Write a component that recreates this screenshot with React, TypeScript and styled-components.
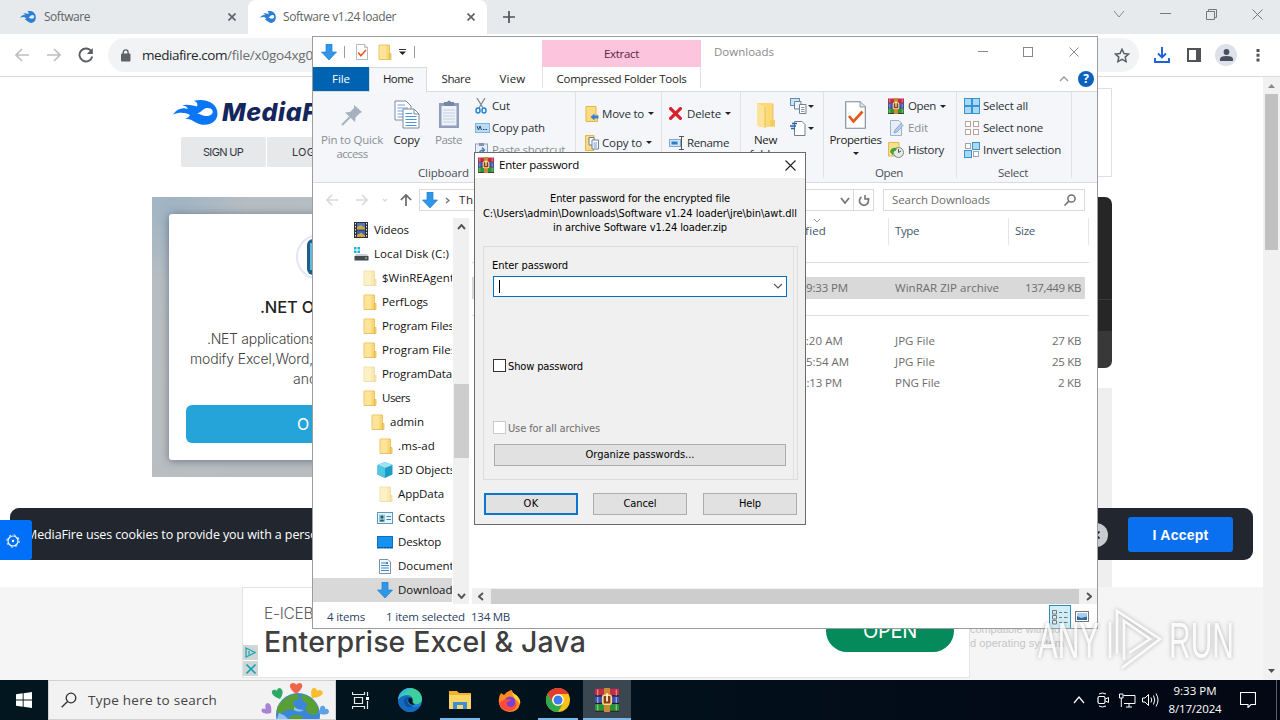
import React, { useLayoutEffect, useRef } from 'react';
import styled, { createGlobalStyle } from 'styled-components';

const GlobalStyle = createGlobalStyle`
  * { box-sizing: border-box; }
  html, body { margin: 0; padding: 0; overflow: hidden; }
  body { font-family: 'Open Sans', 'Noto Sans', sans-serif; font-size: 12px; color: #000; }
  svg { display: block; flex: none; }
`;

const UI = `'Open Sans', 'Noto Sans', sans-serif`;
const TAHOMA = `'DejaVu Sans Condensed', 'DejaVu Sans', sans-serif`;

/* ---------- Text that is tracked to a given advance width ---------- */
const TextSpan = styled.span<{ $size: number; $color: string; $font: string; $weight: number; $line: number; $italic?: boolean }>`
  display: block;
  flex: none;
  width: max-content;
  white-space: pre;
  font-family: ${p => p.$font};
  font-size: ${p => p.$size}px;
  font-weight: ${p => p.$weight};
  font-style: ${p => (p.$italic ? 'italic' : 'normal')};
  line-height: ${p => p.$line}px;
  color: ${p => p.$color};
`;

type TextProps = {
  children: string; w?: number; size?: number; color?: string; font?: string;
  weight?: number; line?: number; italic?: boolean;
};

function Text({ children, w, size = 11.5, color = '#1e1e1e', font = UI, weight = 400, line = 16, italic }: TextProps) {
  const ref = useRef<HTMLSpanElement>(null);
  useLayoutEffect(() => {
    const el = ref.current;
    if (!el || !w) return;
    el.style.letterSpacing = '0px';
    const natural = el.getBoundingClientRect().width;
    el.style.letterSpacing = `${(w - natural) / children.length}px`;
  }, [children, w]);
  return (
    <TextSpan ref={ref} $size={size} $color={color} $font={font} $weight={weight} $line={line} $italic={italic}>
      {children}
    </TextSpan>
  );
}

/* ---------- Icons ---------- */
const Flame = ({ w, h, color }: { w: number; h: number; color: string }) => (
  <svg width={w} height={h} viewBox="0 0 45 25" preserveAspectRatio="none">
    <path fill={color} fillRule="evenodd" d="M0 14.500C4 9 9 7 15 9C14 6.500 12 5.500 9 5.500C13 4 18 5 24 6.500C25 4 24 2 21 .8C27-.6 35-.2 40 4C45 8 46 16 42 20.500C37 26 28 26 22 22C19 20 17 18.500 12 19C14.500 18 16 17 17 15C12 12 6 12 0 14.500ZM24 13.500C28 14 30 16.500 34.500 16C38.500 15.500 40.500 13 39.500 10.500C38 7.500 33 7.500 30.500 9.500C28.500 11 27 12.500 24 13.500Z" />
  </svg>
);
const Cross = ({ s, color, sw = 1 }: { s: number; color: string; sw?: number }) => (
  <svg width={s} height={s} viewBox={`0 0 ${s} ${s}`}>
    <path d={`M.5 .5L${s - 0.5} ${s - 0.5}M${s - 0.5} .5L.5 ${s - 0.5}`} stroke={color} strokeWidth={sw} fill="none" />
  </svg>
);
const Chevron = ({ w, h, dir, color, sw = 1.4 }: { w: number; h: number; dir: 'up' | 'down' | 'left' | 'right'; color: string; sw?: number }) => {
  const d = {
    down: `M1 1L${w / 2} ${h - 1}L${w - 1} 1`,
    up: `M1 ${h - 1}L${w / 2} 1L${w - 1} ${h - 1}`,
    right: `M1 1L${w - 1} ${h / 2}L1 ${h - 1}`,
    left: `M${w - 1} 1L1 ${h / 2}L${w - 1} ${h - 1}`,
  }[dir];
  return <svg width={w} height={h}><path d={d} stroke={color} strokeWidth={sw} fill="none" /></svg>;
};
const Caret = ({ color = '#222' }: { color?: string }) => (
  <svg width="6" height="3"><path d="M0 0H6L3 3Z" fill={color} /></svg>
);
const BlueArrow = () => (
  <svg width="16" height="16"><path d="M5 0H11V8H15.5L8 16L.5 8H5Z" fill="#3096ea" stroke="#1f7fd0" strokeWidth=".7" /></svg>
);
const Folder = ({ pale, w = 14, h = 16 }: { pale?: boolean; w?: number; h?: number }) => (
  <svg width={w} height={h} viewBox="0 0 14 16" preserveAspectRatio="none" opacity={pale ? 0.55 : 1}>
    <path d="M1 1H11.5V9.5H13V15.5H1Z" fill="#fbd978" stroke="#e3b74b" strokeWidth=".8" />
    <path d="M1.5 1.5H8V15H1.5Z" fill="#fde49a" />
    <path d="M11.3 9.5V15" stroke="#d9a93c" strokeWidth=".8" />
  </svg>
);
const OpenFolder = () => (
  <svg width="20" height="28" viewBox="0 0 20 28">
    <path d="M1 2H17V22L19 23V26H4L1 24Z" fill="#fbd878" />
    <path d="M1 2L9 6V27L1 24Z" fill="#fde39a" />
    <path d="M9 6L9 27M17 3V22" stroke="#e9bd58" strokeWidth=".9" />
    <path d="M14 19H19V25H14Z" fill="#f5cb62" />
  </svg>
);
const Sheet = ({ w = 21, h = 28, check }: { w?: number; h?: number; check?: boolean }) => (
  <svg width={w} height={h} viewBox="0 0 21 28" preserveAspectRatio="none">
    <path d="M.7 .7H15L20.3 6V27.3H.7Z" fill="#fff" stroke="#7d8894" strokeWidth="1.1" />
    <path d="M15 .7V6H20.3" fill="#dfe5ea" stroke="#7d8894" strokeWidth=".8" />
    {check && <path d="M4 15L8.5 20.5L17.5 10.5" fill="none" stroke="#e8591c" strokeWidth="2.7" />}
  </svg>
);
const Pin = () => (
  <svg width="22" height="22" viewBox="0 0 22 22">
    <path d="M13 1L21 8L18.5 9.5L14.5 13.5L14 18L4 8.5L9 8L13 4Z" fill="#a5b1be" />
    <path d="M9 13L1 21" stroke="#a5b1be" strokeWidth="2" />
  </svg>
);
const CopyIcon = () => (
  <svg width="26" height="29" viewBox="0 0 26 29">
    <path d="M1 1H12L17 6V20H1Z" fill="#fff" stroke="#7b8aa0" />
    <path d="M3.500 5H11M3.500 8H14M3.500 11H14M3.500 14H14M3.500 17H14" stroke="#6aa2dc" />
    <path d="M9 9H20L25 14V28H9Z" fill="#fff" stroke="#7b8aa0" />
    <path d="M20 9V14H25" fill="none" stroke="#7b8aa0" />
    <path d="M11.500 13.500H18M11.500 16.500H22.500M11.500 19.500H22.500M11.500 22.500H22.500M11.500 25.500H22.500" stroke="#4f92d8" />
  </svg>
);
const PasteIcon = () => (
  <svg width="22" height="29" viewBox="0 0 22 29">
    <rect x="1" y="3" width="20" height="25" fill="#8f9fbb" />
    <rect x="3.500" y="6" width="15" height="19.500" fill="#eef2f9" />
    <path d="M5 10H17M5 13H17M5 16H17M5 19H17M5 22H17" stroke="#c4d0e4" />
    <path d="M6 2H9Q11-1 13 2H16V6H6Z" fill="#7687a5" />
  </svg>
);
const Scissors = () => (
  <svg width="12" height="16" viewBox="0 0 12 16">
    <path d="M2 0L8 10M10 0L4 10" stroke="#7d8a99" strokeWidth="1.300" />
    <ellipse cx="3" cy="12.500" rx="2" ry="2.500" fill="none" stroke="#2b86cf" strokeWidth="1.500" />
    <ellipse cx="9" cy="12.500" rx="2" ry="2.500" fill="none" stroke="#2b86cf" strokeWidth="1.500" />
  </svg>
);
const PathIcon = () => (
  <svg width="15" height="10"><rect x=".5" y=".5" width="14" height="9" fill="#b9dcf5" stroke="#7fb3dc" /><path d="M2 3L3.500 7L5 3L6.500 7M8 6.500H9.500M10.500 6.500H12" stroke="#24486e" fill="none" /></svg>
);
const ShortcutIcon = () => (
  <svg width="13" height="16"><rect x=".5" y="2" width="12" height="13.500" fill="#e8eef7" stroke="#8f9fbb" /><path d="M4 1H9V4H4Z" fill="#8093b2" /><path d="M4 13C4 9 6 8 9 8M7 5.500L9.500 8L7 10.500" fill="none" stroke="#4d7fb8" strokeWidth="1.400" /></svg>
);
const MoveIcon = () => (
  <svg width="14" height="16"><path d="M1 .500H11V9H12.500V15.500H1Z" fill="#fbdc82" stroke="#e3b74b" /><path d="M13.500 9.500H9.500V7.500L5.500 11L9.500 14.500V12.500H13.500Z" fill="#3b7fd4" /></svg>
);
const CopyToIcon = () => (
  <svg width="14" height="16"><path d="M.5 .5H9V15.500H.5Z" fill="#fbdc82" stroke="#e3b74b" /><path d="M4 2.500H9V10H4Z" fill="#fff" stroke="#6d7f95" /><path d="M7 5H13.500V14H7Z" fill="#fff" stroke="#6d7f95" /><path d="M8.500 8H12M8.500 10H12M8.500 12H12" stroke="#5b9bdc" /></svg>
);
const RenameIcon = () => (
  <svg width="16" height="14"><rect x=".5" y="3.500" width="11" height="7" fill="#cfe6f8" stroke="#7fa8cc" /><rect x="2.500" y="5.500" width="6" height="3" fill="#2b7cc8" /><path d="M10 .5H15M12.500 .5V13.500M10 13.500H15" stroke="#555" fill="none" /></svg>
);
const EasyIcon = () => (
  <svg width="17" height="16"><rect x=".5" y=".5" width="9" height="7" fill="#cfe3f2" stroke="#5b8fb8" /><path d="M4.500 3.500H11V11H4.500Z" fill="#eef3f7" stroke="#6f8090" /><path d="M9.500 6.500H16V15.500H9.500Z" fill="#fff" stroke="#6f8090" /><path d="M11 9.500H14.500M11 11.500H14.500M11 13.500H14.500" stroke="#8b98a5" /></svg>
);
const NewItemIcon = () => (
  <svg width="16" height="16"><path d="M4.500 1.500H12L15 4.500V15.500H4.500Z" fill="#fff" stroke="#6f8090" /><path d="M2 3.500H7M0 6H6M1 8.500H5" stroke="#2266aa" strokeWidth="1.300" /></svg>
);
const EditIcon = () => (
  <svg width="16" height="16"><path d="M2.500 .5H11L13.500 3V15.500H2.500Z" fill="#e6eef8" stroke="#9db4cf" /><path d="M6 13L7 10L13 3.500L15 5.500L9 12Z" fill="#b6cdea" stroke="#8fa9c9" /></svg>
);
const HistoryIcon = () => (
  <svg width="16" height="16"><path d="M.5 .5H11V14H.5Z" fill="#fbdf8d" stroke="#e0bb55" /><circle cx="10.500" cy="10.500" r="5" fill="#e4ebe4" stroke="#7b8a84" /><path d="M10.500 7V10.500L13 9" stroke="#555" fill="none" /><path d="M2 10C3 6 6 5 9 6.500L7.500 9C5 9 4 11 6 14.500Z" fill="#42a33a" /></svg>
);
const SelectIcon = ({ mode }: { mode: 'all' | 'none' | 'invert' }) => {
  const cells = [[0.5, 0.5], [8.500, 0.5], [0.5, 8.500], [8.500, 8.500]];
  const on = (i: number) => mode === 'all' || (mode === 'invert' && (i === 1 || i === 2));
  return (
    <svg width="16" height="16">
      {cells.map(([x, y], i) => on(i)
        ? <rect key={i} x={x} y={y} width="7" height="7" fill="#a8daf8" stroke="#3a92d0" />
        : <rect key={i} x={x + 1} y={y + 1} width="5" height="5" fill="#fff" stroke={mode === 'none' ? '#b5a59c' : '#9aa5ae'} />)}
    </svg>
  );
};
const WinRar = ({ s = 16 }: { s?: number }) => (
  <svg width={s} height={s} viewBox="0 0 16 16">
    <rect x="0" y=".5" width="16" height="4.500" fill="#c62b48" />
    <rect x="0" y="5.500" width="16" height="4.500" fill="#3c53b4" />
    <rect x="0" y="10.500" width="16" height="5" fill="#2e9138" />
    <path d="M0 5.200H16M0 10.200H16M0 15.500H16" stroke="#2a1a24" strokeWidth=".8" />
    <path d="M1.800 1V5M14.200 1V5" stroke="#f08a98" strokeWidth=".8" />
    <path d="M1.800 6V10M14.200 6V10" stroke="#8fb4ec" strokeWidth=".8" />
    <path d="M1.800 11V15M14.200 11V15" stroke="#85d184" strokeWidth=".8" />
    <rect x="6" y="0" width="4" height="16" fill="#c98a34" />
    <rect x="5.200" y="4.800" width="5.600" height="6" rx="1" fill="#8a3a14" stroke="#f7dc92" strokeWidth="1.100" />
    <rect x="7.400" y="3.500" width="1.200" height="5.500" fill="#fff3cf" />
  </svg>
);
const VideosIcon = () => (
  <svg width="14" height="16"><rect width="14" height="16" fill="#2c2f36" /><rect x="3" y="1" width="8" height="6.500" fill="#4b78c4" /><rect x="3" y="8.500" width="8" height="6.500" fill="#3463b4" /><path d="M3 5L7 3L11 6V7.500H3ZM3 13L7 10.500L11 13.500V15H3Z" fill="#d3a63c" /><path d="M1.500 1V16M12.500 1V16" stroke="#e8e8e8" strokeDasharray="1.500 1.500" /></svg>
);
const DiskIcon = () => (
  <svg width="16" height="14"><path d="M1 0H3.500V2.500H1ZM4.500 0H7V2.500H4.500ZM1 3.500H3.500V6H1ZM4.500 3.500H7V6H4.500Z" fill="#20b1d8" /><path d="M3 7H14L15.500 9.500H1.500Z" fill="#c9cfd3" /><rect x="1.500" y="9" width="14" height="4.500" fill="#444b50" /><rect x="12" y="10.500" width="2" height="1.200" fill="#7de37d" /></svg>
);
const CubeIcon = () => (
  <svg width="16" height="16"><path d="M8 0L15.500 3V12.500L8 16L.5 12.500V3Z" fill="#1d9cc6" /><path d="M8 0L15.500 3L8 6L.5 3Z" fill="#9ae4f3" /><path d="M.5 3L8 6V16L.5 12.500Z" fill="#4fc7e0" /></svg>
);
const ContactsIcon = () => (
  <svg width="16" height="12"><rect x=".5" y=".5" width="15" height="11" fill="#e8f4fb" stroke="#5a98bd" /><rect x="2" y="2.500" width="6" height="7" fill="#8cc5e4" /><circle cx="5" cy="5" r="1.500" fill="#2e5a4a" /><path d="M2.500 9.500Q5 5.500 7.500 9.500Z" fill="#2e5a4a" /><path d="M9.500 4.500H14M9.500 7.500H14" stroke="#4784ac" /></svg>
);
const DesktopIcon = () => (
  <svg width="16" height="13"><rect x=".5" y=".5" width="15" height="11.500" fill="#1592ef" stroke="#0b6fc2" /><path d="M1 11.500H15" stroke="#0a4f94" strokeDasharray="2 1" /></svg>
);
const DocIcon = () => (
  <svg width="12" height="15"><path d="M.5 .5H9L11.500 3V14.500H.5Z" fill="#f5fafe" stroke="#7e93a6" /><path d="M2 4H6M2 6.500H10M2 9H10M2 11.500H10" stroke="#3e86c4" /><rect x="6.500" y="3" width="2.500" height="2" fill="#3e86c4" /></svg>
);
const Magnifier = ({ s, color, sw }: { s: number; color: string; sw: number }) => (
  <svg width={s} height={s} viewBox="0 0 12 12"><circle cx="7.500" cy="4.500" r="3.600" fill="none" stroke={color} strokeWidth={sw} /><path d="M4.900 7.100L.5 11.500" stroke={color} strokeWidth={sw} /></svg>
);
const ArrowLine = ({ w, dir, color, sw = 1.6 }: { w: number; dir: 'left' | 'right' | 'up'; color: string; sw?: number }) => {
  const rot = { left: 0, right: 180, up: 90 }[dir];
  return <svg width={w} height={w} viewBox="0 0 14 14"><path transform={`rotate(${rot} 7 7)`} d="M7 1L1 7L7 13M1 7H14" fill="none" stroke={color} strokeWidth={sw} /></svg>;
};

/* ---------- Shared pieces ---------- */
const Desktop = styled.div`position: relative; width: 1280px; height: 720px; overflow: hidden; background: #fff; display: flex; flex-direction: column;`;
const Center = styled.div<{ $w?: number; $h?: number }>`
  flex: none; display: flex; align-items: center; justify-content: center;
  width: ${p => (p.$w ? `${p.$w}px` : 'auto')}; height: ${p => (p.$h ? `${p.$h}px` : 'auto')};
`;
const Gap = styled.div<{ $w?: number; $h?: number }>`flex: none; width: ${p => p.$w ?? 0}px; height: ${p => p.$h ?? 0}px;`;
const Grow = styled.div`flex: 1; min-width: 0;`;

/* ---------- Browser ---------- */
const TabStrip = styled.div`height: 34px; flex: none; background: #e7eaed; display: flex; align-items: stretch;`;
const Tab = styled.div<{ $active?: boolean; $w: number }>`
  width: ${p => p.$w}px; padding: 0 12px 0 ${p => (p.$active ? 12 : 20)}px; display: flex; align-items: center;
  background: ${p => (p.$active ? '#fff' : 'transparent')}; border-radius: 8px 8px 0 0;
`;
const Toolbar = styled.div`height: 43px; flex: none; background: #fff; border-bottom: 1px solid #d9dce0; display: flex; align-items: center; padding-left: 6px;`;
const Omnibox = styled.div`width: 1031px; height: 34px; border-radius: 17px; background: #f1f3f4; display: flex; align-items: center; padding: 0 9px 0 13px; margin-left: 6px;`;
const Avatar = styled.div`width: 22px; height: 22px; border-radius: 50%; background: #dfe1ea; display: flex; align-items: center; justify-content: center;`;
const Viewport = styled.div`height: 603px; flex: none; display: flex; overflow: hidden;`;
const Page = styled.div`width: 1263px; display: flex; flex-direction: column; position: relative; background: #fff; overflow: hidden;`;
const Scrollbar = styled.div`width: 17px; background: #f1f1f1; display: flex; flex-direction: column; align-items: center; padding: 7px 0 7px;`;
const ScrollThumb = styled.div`width: 13px; height: 156px; background: #c1c1c1; margin-top: 6px;`;
const SiteHeader = styled.div`height: 120px; flex: none; display: flex; justify-content: space-between; padding: 0 151px 0 173px;`;
const Brand = styled.div`width: 200px; display: flex; flex-direction: column; padding-top: 20px;`;
const BrandRow = styled.div`display: flex; align-items: center; height: 30px; gap: 4px;`;
const AuthRow = styled.div`display: flex; gap: 1px; padding: 10px 0 0 8px;`;
const AuthButton = styled.div`width: 85px; flex: none; height: 30px; background: #e6e8ea; border-radius: 2px; display: flex; align-items: center; padding-left: 22px;`;
const SideBox = styled.div`width: 100px; height: 89px; margin-top: 11px; border: 1px solid #dfdfdf;`;
const Hero = styled.div`height: 280px; flex: none; display: flex; justify-content: space-between; padding: 0 151px 0 152px;`;
const HeroArt = styled.div`
  width: 400px; padding: 17px 0 17px 17px;
  background: radial-gradient(circle at 22px 12px, #9fb3c3 0, rgba(159, 179, 195, 0) 75px), linear-gradient(155deg, #b4bdc3 0, #babfc2 40%, #b6bbbf 100%);
`;
const AdCard = styled.div`width: 340px; height: 246px; background: #fff; border-radius: 3px; box-shadow: 0 1px 9px rgba(50, 60, 80, .55); padding: 20px 0 0 17px;`;
const AdIcon = styled.div`width: 46px; height: 46px; margin-left: 110px; border: 2px solid #e4e5f7; border-radius: 50%; display: flex; align-items: center; padding-left: 9px;`;
const AdLine = styled.div<{ $x: number }>`padding-left: ${p => p.$x}px;`;
const AdButton = styled.div`height: 38px; margin-top: 16px; border-radius: 6px; background: #25a4da; display: flex; align-items: center; padding-left: 111px;`;
const RightColumn = styled.div`width: 60px; display: flex; flex-direction: column;`;
const DarkPanel = styled.div`height: 171px; flex: none; background: linear-gradient(#262626 0 102px, #3a3a3a 102px 103px, #262626 103px 134px, #383838 134px); border-radius: 0 7px 7px 0;`;
const GrayPanel = styled.div`height: 199px; flex: none; margin-top: 20px; background: #efefef;`;
const CookieBar = styled.div`
  position: absolute; left: 10px; top: 431px; width: 1243px; height: 52px; border-radius: 9px; background: #22272f;
  display: flex; align-items: center; padding: 1px 20px 0 16px;
`;
const CloseDot = styled.div`width: 24px; height: 24px; border-radius: 50%; background: #c8cbd0; display: flex; align-items: center; justify-content: center;`;
const AcceptButton = styled.div`width: 105px; height: 35px; margin-left: 20px; border-radius: 3px; background: #0a70f0; display: flex; align-items: center; justify-content: center;`;
const PrivacyTab = styled.div`position: absolute; left: 0; top: 443px; width: 32px; height: 40px; background: #0070f8; border-radius: 0 3px 3px 0; display: flex; align-items: center; justify-content: center; padding: 2px 6px 0 0;`;
const StickyBand = styled.div`position: absolute; left: 0; top: 510px; width: 1263px; height: 93px; background: #f5f5f5; display: flex; padding-left: 242px;`;
const BannerAd = styled.div`width: 728px; height: 91px; background: #fff; border: 1px solid #e4e4e4; display: flex;`;
const AdChoices = styled.div`width: 15px; display: flex; flex-direction: column; justify-content: flex-end; gap: 1px; padding-bottom: 1px;`;
const AdChoice = styled.div`width: 15px; height: 15px; background: #d0d6d6; display: flex; align-items: center; justify-content: center;`;
const BannerCopy = styled.div`padding: 15px 0 0 6px; width: 568px;`;
const OpenPill = styled.div`width: 128px; height: 42px; margin-top: 22px; border-radius: 21px; background: #058a5c; display: flex; justify-content: center; align-items: center;`;
const FinePrint = styled.div`padding: 36px 0 0 0;`;

function Browser() {
  return (
    <>
      <TabStrip>
        <Tab $w={248}>
          <Flame w={16} h={12} color="#2d7fd6" /><Gap $w={8} />
          <Text w={46} size={12} color="#5f6368">Software</Text><Grow />
          <Cross s={8} color="#5f6368" sw={1.7} />
        </Tab>
        <Tab $active $w={239}>
          <Flame w={16} h={12} color="#2d7fd6" /><Gap $w={7} />
          <Text w={113} size={12} color="#5f6368">Software v1.24 loader</Text><Grow />
          <Cross s={8} color="#5f6368" sw={1.7} />
        </Tab>
        <Center $w={44}><svg width="12" height="12"><path d="M6 0V12M0 6H12" stroke="#4f5358" strokeWidth="1.7" /></svg></Center>
        <Grow />
        <Center $w={46} $h={28}><Chevron w={12} h={8} dir="down" color="#888" sw={1} /></Center>
        <Center $w={46} $h={28}><svg width="11" height="2"><path d="M0 .5H11" stroke="#777" /></svg></Center>
        <Center $w={46} $h={28}><svg width="11" height="11"><path d="M.5 2.500H8.500V10.500H.5ZM2.500 2.500V.5H10.500V8.500H8.500" fill="none" stroke="#777" /></svg></Center>
        <Center $w={46} $h={28}><Cross s={11} color="#777" /></Center>
      </TabStrip>
      <Toolbar>
        <Center $w={32}><ArrowLine w={14} dir="left" color="#bcbfc2" /></Center>
        <Center $w={32}><ArrowLine w={14} dir="right" color="#bcbfc2" /></Center>
        <Center $w={32}>
          <svg width="16" height="16"><path d="M13.500 4.500A6.500 6.500 0 1 0 14.300 9.500" fill="none" stroke="#5a5e63" strokeWidth="1.9" /><path d="M14.800 1V7H8.800Z" fill="#5a5e63" /></svg>
        </Center>
        <Omnibox>
          <svg width="10" height="13"><rect x="0" y="4.500" width="9.500" height="8" rx="1" fill="#5f6368" /><path d="M2.300 5V3.300A2.400 2.400 0 0 1 7.100 3.300V5" fill="none" stroke="#5f6368" strokeWidth="1.400" /></svg>
          <Gap $w={11} />
          <Text w={85} size={13.5} color="#26282b" line={20}>mediafire.com</Text>
          <Text w={86} size={13.5} color="#6a6e73" line={20}>/file/x0go4xg0</Text>
          <Grow />
          <svg width="16" height="15" viewBox="0 0 16 15"><path d="M8 1.300L10 5.500L14.600 6L11.200 9.100L12.100 13.600L8 11.300L3.900 13.600L4.800 9.100L1.400 6L6 5.500Z" fill="none" stroke="#5a5e66" strokeWidth="1.500" /></svg>
        </Omnibox>
        <Gap $w={7} />
        <Center $w={32}><svg width="16" height="16"><path d="M8 0V10M4 6.500L8 10.500L12 6.500M1 11V15H15V11" fill="none" stroke="#1a62d8" strokeWidth="1.900" /></svg></Center>
        <Center $w={32}><svg width="14" height="14"><rect x="1" y="1" width="12" height="12" fill="none" stroke="#4f5358" strokeWidth="2" /><rect x="9" y="1" width="4" height="12" fill="#4f5358" /></svg></Center>
        <Center $w={32}><Avatar><svg width="13" height="12"><circle cx="6.500" cy="3" r="2.900" fill="#4a4e5e" /><path d="M0 12V10Q0 7 6.500 7T13 10V12Z" fill="#4a4e5e" /></svg></Avatar></Center>
        <Center $w={32}><svg width="4" height="14"><path d="M.5 1H3.500V4H.5ZM.5 5.700H3.500V8.700H.5ZM.5 10.400H3.500V13.400H.5Z" fill="#50545a" /></svg></Center>
      </Toolbar>
      <Viewport>
        <Page>
          <SiteHeader>
            <Brand>
              <BrandRow>
                <Flame w={45} h={25} color="#0a75f5" />
                <Text w={129} size={25} weight={800} italic color="#14265c" font="Inter, sans-serif" line={32}>MediaFire</Text>
              </BrandRow>
              <AuthRow>
                <AuthButton><Text w={40} size={11} color="#33373d" font="Inter, sans-serif">SIGN UP</Text></AuthButton>
                <AuthButton><Gap $w={3} /><Text w={38} size={11} color="#33373d" font="Inter, sans-serif">LOG IN</Text></AuthButton>
              </AuthRow>
            </Brand>
            <SideBox />
          </SiteHeader>
          <Hero>
            <HeroArt>
              <AdCard>
                <AdIcon><svg width="30" height="38"><rect x="0" y="1" width="12" height="36" rx="6" fill="#1d5f8a" /><path d="M4 5V32" stroke="#67b7d8" strokeWidth="2" /></svg></AdIcon>
                <Gap $h={15} />
                <AdLine $x={74}><Text w={128} size={16.5} weight={500} color="#222" font="Inter, sans-serif" line={24}>.NET Office APIs</Text></AdLine>
                <Gap $h={10} />
                <AdLine $x={21}><Text w={109} size={14} weight={300} color="#444" font="Inter, sans-serif" line={20}>.NET applications</Text></AdLine>
                <AdLine $x={4}><Text w={123} size={14} weight={300} color="#444" font="Inter, sans-serif" line={20}>modify Excel,Word,</Text></AdLine>
                <AdLine $x={107}><Text size={14} weight={300} color="#444" font="Inter, sans-serif" line={20}>and PDF</Text></AdLine>
                <AdButton><Text w={70} size={16} color="#fff" font="Inter, sans-serif" line={20}>OPEN</Text></AdButton>
              </AdCard>
            </HeroArt>
            <RightColumn><DarkPanel /><GrayPanel /></RightColumn>
          </Hero>
          <StickyBand>
            <BannerAd>
              <AdChoices>
                <AdChoice><svg width="11" height="11"><path d="M1 1L10 5.500L1 10ZM4 4V7.500" fill="none" stroke="#18a5b0" strokeWidth="1.200" /></svg></AdChoice>
                <AdChoice><Cross s={10} color="#18a5b0" sw={1.6} /></AdChoice>
              </AdChoices>
              <BannerCopy>
                <Text w={78} size={15.5} weight={300} color="#606060" font="Inter, sans-serif" line={21}>E-ICEBLUE</Text>
                <Text w={322} size={28.5} weight={500} color="#3f3f3f" font="Inter, sans-serif" line={35}>Enterprise Excel &amp; Java</Text>
              </BannerCopy>
              <OpenPill><Text w={54} size={20} color="#fff" font="Inter, sans-serif" line={24}>OPEN</Text></OpenPill>
            </BannerAd>
            <FinePrint>
              <Text w={90} size={11} color="#c6c6c6" font="'Liberation Sans', sans-serif" line={13}>compatible with no</Text>
              <Text w={94} size={11} color="#c6c6c6" font="'Liberation Sans', sans-serif" line={14}>d operating system</Text>
            </FinePrint>
          </StickyBand>
          <CookieBar>
            <Text w={309} size={12.5} color="#fff" line={20}>MediaFire uses cookies to provide you with a personal</Text>
            <Grow />
            <CloseDot><Cross s={8} color="#22272f" sw={1.8} /></CloseDot>
            <AcceptButton><Text w={56} size={14} weight={700} color="#fff" font="'Liberation Sans', sans-serif">I Accept</Text></AcceptButton>
          </CookieBar>
          <PrivacyTab><svg width="14" height="14"><circle cx="7" cy="7" r="5" fill="none" stroke="#fff" strokeWidth="1.200" /><circle cx="7" cy="7" r="6.200" fill="none" stroke="#fff" strokeDasharray="2 2.870" /><circle cx="7" cy="7" r="1.200" fill="#fff" /></svg></PrivacyTab>
        </Page>
        <Scrollbar>
          <svg width="7" height="4"><path d="M0 4H7L3.500 0Z" fill="#8a8a8a" /></svg>
          <ScrollThumb />
          <Grow />
          <svg width="7" height="4"><path d="M0 0H7L3.500 4Z" fill="#505050" /></svg>
        </Scrollbar>
      </Viewport>
    </>
  );
}

/* ---------- File explorer ---------- */
const ExplorerWindow = styled.div`
  position: absolute; left: 312px; top: 36px; width: 786px; height: 593px; border: 1px solid #9c9c9c; background: #fff;
  display: flex; flex-direction: column; overflow: hidden;
`;
const TitleBar = styled.div`height: 30px; flex: none; display: flex; align-items: center;`;
const Bar = styled.div`width: 1px; height: 12px; background: #9b9b9b;`;
const ContextTab = styled.div`width: 159px; height: 27px; margin-top: 3px; background: #fcc4dd; display: flex; justify-content: center; align-items: center;`;
const TabsRow = styled.div`height: 25px; flex: none; display: flex; border-bottom: 1px solid #dadbdc;`;
const RibbonTab = styled.div<{ $w: number; $kind?: 'file' | 'active' | 'context' }>`
  width: ${p => p.$w}px; flex: none; display: flex; align-items: center; justify-content: center;
  ${p => p.$kind === 'file' && 'background: #0063b1; height: 24px;'}
  ${p => p.$kind === 'active' && 'background: #f5f7fa; border: 1px solid #dadbdc; border-bottom: 0; height: 25px; padding-bottom: 2px;'}
  ${p => p.$kind === 'context' && 'border: solid #e3dfe3; border-width: 0 1px; height: 21px; padding-top: 3px;'}
`;
const Help = styled.div`width: 16px; height: 16px; border-radius: 50%; background: #0b62bd; display: flex; align-items: center; justify-content: center;`;
const Ribbon = styled.div`height: 91px; flex: none; background: #f4f6f9; border-bottom: 1px solid #dadbdc; display: flex;`;
const Group = styled.div<{ $w: number }>`
  width: ${p => p.$w}px; flex: none; height: 86px; border-right: 1px solid #e0e3e6; display: flex; flex-direction: column;
`;
const GroupBody = styled.div<{ $pl?: number }>`height: 73px; flex: none; display: flex; padding-left: ${p => p.$pl ?? 0}px;`;
const GroupName = styled.div<{ $pl: number }>`padding-left: ${p => p.$pl}px;`;
const BigButton = styled.div<{ $w: number }>`width: ${p => p.$w}px; flex: none; display: flex; flex-direction: column; align-items: center; padding-top: 8px;`;
const BigIcon = styled.div`height: 29px; display: flex; align-items: center; margin-bottom: 4px;`;
const SmallList = styled.div<{ $pt: number; $row: number }>`
  padding-top: ${p => p.$pt}px; display: flex; flex-direction: column;
  > div { height: ${p => p.$row}px; }
`;
const SmallRow = styled.div`display: flex; align-items: center;`;
const IconCell = styled.div<{ $w: number }>`width: ${p => p.$w}px; flex: none; display: flex; align-items: center;`;
const AddressRow = styled.div`height: 35px; flex: none; display: flex; align-items: center; padding-bottom: 1px;`;
const AddressBox = styled.div`width: 455px; height: 22px; border: 1px solid #d9d9d9; display: flex; align-items: center; padding-left: 2px;`;
const RefreshCell = styled.div`width: 20px; height: 20px; border-left: 1px solid #d9d9d9; display: flex; align-items: center; justify-content: center;`;
const SearchBox = styled.div`width: 202px; height: 22px; margin-left: 9px; border: 1px solid #d9d9d9; display: flex; align-items: center; padding: 0 8px;`;
const Body = styled.div`height: 386px; flex: none; display: flex;`;
const NavPane = styled.div`width: 139px; margin-right: 1px; height: 384px; flex: none; overflow: hidden;`;
const NavRow = styled.div<{ $x: number; $sel?: boolean }>`height: 24px; display: flex; align-items: center; padding-left: ${p => p.$x}px; background: ${p => (p.$sel ? '#d9d9d9' : 'transparent')};`;
const NavScroll = styled.div`width: 16px; flex: none; height: 386px; background: #f0f0f0; display: flex; flex-direction: column; align-items: center; padding: 6px 0 5px;`;
const NavThumb = styled.div`width: 15px; height: 74px; margin-top: 154px; background: #cdcdcd;`;
const FileList = styled.div`flex: 1; min-width: 0; padding-left: 3px; display: flex; flex-direction: column;`;
const HeadRow = styled.div`height: 27px; flex: none; display: flex; margin-right: 8px; align-items: stretch;`;
const HeadCell = styled.div<{ $w: number }>`width: ${p => p.$w}px; flex: none; border-right: 1px solid #e5e5e5; display: flex; align-items: center; padding: 0 0 1px 6px;`;
const DateHead = styled(HeadCell)`flex-direction: column; align-items: flex-end; padding-right: 62px;`;
const SortMark = styled.div`height: 4px; margin-right: 5px;`;
const GroupLine = styled.div<{ $mt: number; $mb: number }>`height: 1px; flex: none; background: #dedede; margin: ${p => p.$mt}px 8px ${p => p.$mb}px 0;`;
const FileRow = styled.div<{ $sel?: boolean }>`height: ${p => (p.$sel ? 22 : 21)}px; flex: none; margin-right: 12px; display: flex; align-items: center; background: ${p => (p.$sel ? '#d9d9d9' : 'transparent')};`;
const DateCell = styled.div<{ $w: number }>`width: ${p => p.$w}px; flex: none; display: flex; justify-content: flex-end;`;
const TypeCell = styled.div<{ $ml: number }>`margin-left: ${p => p.$ml}px; flex: 1;`;
const SizeCell = styled.div`padding-right: 4px;`;
const HScroll = styled.div`height: 16px; flex: none; margin-top: auto; background: #f0f0f0; display: flex; align-items: center; justify-content: space-between; padding: 0 5px 0 6px;`;
const HThumb = styled.div`width: 588px; height: 15px; background: #cdcdcd;`;
const StatusBar = styled.div`height: 25px; flex: none; display: flex; align-items: center; padding-left: 14px;`;
const ViewButton = styled.div<{ $on?: boolean }>`
  width: 22px; height: 24px; display: flex; align-items: center; justify-content: center;
  border: 1px solid ${p => (p.$on ? '#2f8fb4' : 'transparent')}; background: ${p => (p.$on ? '#cfeefa' : 'transparent')};
`;

const navItems: { x: number; icon: React.ReactNode; name: string; w: number; tx: number; sel?: boolean }[] = [
  { x: 41, tx: 61, icon: <VideosIcon />, name: 'Videos', w: 35 },
  { x: 40, tx: 61, icon: <DiskIcon />, name: 'Local Disk (C:)', w: 75 },
  { x: 50, tx: 69, icon: <Folder pale />, name: '$WinREAgent', w: 72 },
  { x: 50, tx: 69, icon: <Folder />, name: 'PerfLogs', w: 46 },
  { x: 50, tx: 69, icon: <Folder />, name: 'Program Files', w: 72 },
  { x: 50, tx: 69, icon: <Folder />, name: 'Program Files (x86)', w: 104 },
  { x: 50, tx: 69, icon: <Folder pale />, name: 'ProgramData', w: 70 },
  { x: 50, tx: 69, icon: <Folder />, name: 'Users', w: 28 },
  { x: 58, tx: 77, icon: <Folder />, name: 'admin', w: 34 },
  { x: 66, tx: 85, icon: <Folder />, name: '.ms-ad', w: 37 },
  { x: 64, tx: 85, icon: <CubeIcon />, name: '3D Objects', w: 57 },
  { x: 66, tx: 85, icon: <Folder pale />, name: 'AppData', w: 46 },
  { x: 64, tx: 85, icon: <ContactsIcon />, name: 'Contacts', w: 47 },
  { x: 64, tx: 85, icon: <DesktopIcon />, name: 'Desktop', w: 43 },
  { x: 66, tx: 85, icon: <DocIcon />, name: 'Documents', w: 61 },
  { x: 64, tx: 85, icon: <BlueArrow />, name: 'Downloads', w: 60, sel: true },
];

const files = [
  { time: '6:20 AM', w: 44, end: 844, type: 'JPG File', tw: 40, size: '27 KB', sw: 29 },
  { time: '5:54 AM', w: 43, end: 850, type: 'JPG File', tw: 40, size: '25 KB', sw: 29 },
  { time: '2:13 PM', w: 42, end: 843, type: 'PNG File', tw: 45, size: '2 KB', sw: 23 },
];
const LIST_LEFT = 473;

function Small({ icon, cell, text, w, caret, dim }: { icon: React.ReactNode; cell: number; text: string; w: number; caret?: boolean; dim?: boolean }) {
  return (
    <SmallRow>
      <IconCell $w={cell}>{icon}</IconCell>
      <Text w={w} color={dim ? '#8a8e93' : '#2a2f36'}>{text}</Text>
      {caret && <><Gap $w={4} /><Caret /></>}
    </SmallRow>
  );
}

function Explorer() {
  return (
    <ExplorerWindow>
      <TitleBar>
        <Gap $w={8} /><BlueArrow /><Gap $w={7} /><Bar /><Gap $w={11} />
        <Sheet w={12} h={16} check /><Gap $w={10} /><Folder h={16} /><Gap $w={7} />
        <svg width="7" height="6"><path d="M0 .5H7" stroke="#333" /><path d="M0 2.500H7L3.500 6Z" fill="#222" /></svg>
        <Gap $w={8} /><Bar /><Gap $w={127} />
        <ContextTab><Text w={35} color="#5d2440">Extract</Text></ContextTab>
        <Gap $w={13} /><Text w={60} color="#8b8b8b">Downloads</Text>
        <Grow />
        <Center $w={46}><svg width="10" height="2"><path d="M0 .5H10" stroke="#888" /></svg></Center>
        <Center $w={44}><svg width="10" height="10"><rect x=".5" y=".5" width="9" height="9" fill="none" stroke="#888" /></svg></Center>
        <Center $w={47}><Cross s={10} color="#888" /></Center>
      </TitleBar>
      <TabsRow>
        <RibbonTab $w={56} $kind="file"><Text w={18} color="#fff">File</Text></RibbonTab>
        <RibbonTab $w={58} $kind="active"><Text w={30}>Home</Text></RibbonTab>
        <RibbonTab $w={58}><Text w={29}>Share</Text></RibbonTab>
        <RibbonTab $w={55}><Text w={26}>View</Text></RibbonTab>
        <Gap $w={2} />
        <RibbonTab $w={159} $kind="context"><Text w={130}>Compressed Folder Tools</Text></RibbonTab>
        <Grow />
        <Center $w={14}><Chevron w={10} h={6} dir="up" color="#999" /></Center>
        <Gap $w={7} />
        <Center><Help><Text size={12} weight={700} color="#fff">?</Text></Help></Center>
        <Gap $w={3} />
      </TabsRow>
      <Ribbon>
        <Group $w={263}>
          <GroupBody>
            <BigButton $w={78}><BigIcon><Pin /></BigIcon><Text w={62} line={14} color="#8a8e93">Pin to Quick</Text><Text w={31} line={13} color="#8a8e93">access</Text></BigButton>
            <BigButton $w={31}><BigIcon><CopyIcon /></BigIcon><Text w={26} line={14}>Copy</Text></BigButton>
            <BigButton $w={53}><BigIcon><PasteIcon /></BigIcon><Text w={27} line={14} color="#8a8e93">Paste</Text></BigButton>
            <SmallList $pt={3} $row={22}>
              <Small icon={<Scissors />} cell={17} text="Cut" w={18} />
              <Small icon={<PathIcon />} cell={17} text="Copy path" w={53} />
              <Small icon={<ShortcutIcon />} cell={17} text="Paste shortcut" w={73} dim />
            </SmallList>
          </GroupBody>
          <GroupName $pl={105}><Text w={51} color="#4a4f55">Clipboard</Text></GroupName>
        </Group>
        <Group $w={86}>
          <GroupBody $pl={9}>
            <SmallList $pt={7} $row={29}>
              <Small icon={<MoveIcon />} cell={17} text="Move to" w={42} caret />
              <Small icon={<CopyToIcon />} cell={17} text="Copy to" w={40} caret />
            </SmallList>
          </GroupBody>
        </Group>
        <Group $w={79}>
          <GroupBody $pl={7}>
            <SmallList $pt={7} $row={29}>
              <Small icon={<Cross s={13} color="#d8202a" sw={3.2} />} cell={18} text="Delete" w={34} caret />
              <Small icon={<RenameIcon />} cell={18} text="Rename" w={42} />
            </SmallList>
          </GroupBody>
        </Group>
        <Group $w={83}>
          <GroupBody>
            <BigButton $w={49}><BigIcon><OpenFolder /></BigIcon><Text w={23} line={14}>New</Text><Text w={32} line={13}>folder</Text></BigButton>
            <SmallList $pt={3} $row={22}>
              <SmallRow><IconCell $w={18}><EasyIcon /></IconCell><Caret /></SmallRow>
              <SmallRow><IconCell $w={18}><NewItemIcon /></IconCell><Caret /></SmallRow>
            </SmallList>
          </GroupBody>
        </Group>
        <Group $w={133}>
          <GroupBody>
            <BigButton $w={63}><BigIcon><Sheet check /></BigIcon><Text w={52} line={14}>Properties</Text><Gap $h={5} /><Caret /></BigButton>
            <Gap $w={1} />
            <SmallList $pt={3} $row={22}>
              <Small icon={<WinRar />} cell={20} text="Open" w={28} caret />
              <Small icon={<EditIcon />} cell={20} text="Edit" w={20} dim />
              <Small icon={<HistoryIcon />} cell={20} text="History" w={36} />
            </SmallList>
          </GroupBody>
          <GroupName $pl={51}><Text w={28} color="#4a4f55">Open</Text></GroupName>
        </Group>
        <Group $w={115}>
          <GroupBody $pl={7}>
            <SmallList $pt={3} $row={22}>
              <Small icon={<SelectIcon mode="all" />} cell={19} text="Select all" w={45} />
              <Small icon={<SelectIcon mode="none" />} cell={19} text="Select none" w={60} />
              <Small icon={<SelectIcon mode="invert" />} cell={19} text="Invert selection" w={78} />
            </SmallList>
          </GroupBody>
          <GroupName $pl={41}><Text w={30} color="#4a4f55">Select</Text></GroupName>
        </Group>
      </Ribbon>
      <AddressRow>
        <Gap $w={13} /><ArrowLine w={12} dir="left" color="#dadada" sw={1.8} />
        <Gap $w={18} /><ArrowLine w={12} dir="right" color="#dadada" sw={1.8} />
        <Gap $w={14} /><Chevron w={6} h={4} dir="down" color="#dadada" />
        <Gap $w={12} /><ArrowLine w={12} dir="up" color="#6a6a6a" sw={2} />
        <Gap $w={7} />
        <AddressBox>
          <BlueArrow /><Gap $w={7} /><Chevron w={5} h={7} dir="right" color="#777" /><Gap $w={9} />
          <Text w={43}>This PC</Text>
          <Grow />
          <Chevron w={10} h={7} dir="down" color="#777" sw={1.8} />
          <Gap $w={3} />
          <RefreshCell><svg width="12" height="13"><path d="M3.500 3A4.500 4.500 0 1 0 9.500 4" fill="none" stroke="#777" strokeWidth="1.700" /><path d="M7 1V5H11.500" fill="none" stroke="#777" strokeWidth="1.600" /></svg></RefreshCell>
        </AddressBox>
        <SearchBox><Text w={98} color="#6d6d6d">Search Downloads</Text><Grow /><Magnifier s={12} color="#6d6d6d" sw={1.5} /></SearchBox>
      </AddressRow>
      <Body>
        <NavPane>
          {navItems.map((n, i) => (
            <NavRow key={i} $x={n.x} $sel={n.sel}>
              <IconCell $w={n.tx - n.x}>{n.icon}</IconCell>
              <Text w={n.w} color="#111">{n.name}</Text>
            </NavRow>
          ))}
        </NavPane>
        <NavScroll>
          <Chevron w={9} h={6} dir="up" color="#555" sw={1.9} />
          <NavThumb />
          <Grow />
          <Chevron w={9} h={6} dir="down" color="#555" sw={1.9} />
        </NavScroll>
        <FileList>
          <HeadRow>
            <DateHead $w={417}><SortMark><Chevron w={8} h={5} dir="down" color="#999" sw={1} /></SortMark><Text w={78} line={18} color="#44566c">Date modified</Text></DateHead>
            <HeadCell $w={120}><Text w={24} color="#44566c">Type</Text></HeadCell>
            <HeadCell $w={80}><Text w={20} color="#44566c">Size</Text></HeadCell>
          </HeadRow>
          <GroupLine $mt={17} $mb={14} />
          <FileRow $sel>
            <DateCell $w={849 - LIST_LEFT}><Text w={42} color="#6d6d6d">9:33 PM</Text></DateCell>
            <TypeCell $ml={47}><Text w={104} color="#6d6d6d">WinRAR ZIP archive</Text></TypeCell>
            <SizeCell><Text w={56} color="#6d6d6d">137,449 KB</Text></SizeCell>
          </FileRow>
          <GroupLine $mt={16} $mb={14} />
          {files.map(f => (
            <FileRow key={f.time}>
              <DateCell $w={f.end - LIST_LEFT}><Text w={f.w} color="#6d6d6d">{f.time}</Text></DateCell>
              <TypeCell $ml={896 - f.end}><Text w={f.tw} color="#6d6d6d">{f.type}</Text></TypeCell>
              <SizeCell><Text w={f.sw} color="#6d6d6d">{f.size}</Text></SizeCell>
            </FileRow>
          ))}
          <HScroll>
            <Chevron w={6} h={9} dir="left" color="#555" sw={1.9} />
            <HThumb />
            <Chevron w={6} h={9} dir="right" color="#555" sw={1.9} />
          </HScroll>
        </FileList>
      </Body>
      <StatusBar>
        <Text w={38} color="#2c3f66">4 items</Text><Gap $w={21} />
        <Text w={79} color="#2c3f66">1 item selected</Text><Gap $w={6} />
        <Text w={39} color="#2c3f66">134 MB</Text>
        <Grow />
        <ViewButton $on><svg width="16" height="16"><path d="M.5 1.500H4.500V5H.5ZM.5 6.500H4.500V10H.5ZM.5 11.500H4.500V15H.5ZM7 3.500H10M12 3.500H15.500M7 8.500H10M12 8.500H15.500M7 13.500H10M12 13.500H15.500" fill="none" stroke="#777" /></svg></ViewButton>
        <ViewButton><svg width="14" height="11"><rect x=".5" y=".5" width="13" height="10" fill="#fff" stroke="#777" /><rect x="2" y="2" width="10" height="7" fill="#a6cdf0" /><path d="M2 9V5L6 7L12 5.500V9Z" fill="#2f6d9c" /></svg></ViewButton>
        <Gap $w={4} />
      </StatusBar>
    </ExplorerWindow>
  );
}

/* ---------- Password dialog ---------- */
const DialogWindow = styled.div`
  position: absolute; left: 474px; top: 152px; width: 332px; height: 373px; border: 1px solid #6b6b6b; background: #f0f0f0;
  display: flex; flex-direction: column;
`;
const DialogTitle = styled.div`height: 25px; flex: none; background: #fff; display: flex; align-items: center; padding: 0 9px 1px 3px;`;
const Prompt = styled.div`height: 68px; flex: none; padding-top: 14px; display: flex; flex-direction: column; align-items: center;`;
const Fieldset = styled.div`
  width: 315px; height: 234px; flex: none; margin-left: 8px; border: 1px solid #dcdcdc; box-shadow: inset -3px 0 0 #f0f0f0, inset -4px 0 0 #e0e0e0;
  padding: 11px 0 0 8px; display: flex; flex-direction: column;
`;
const PasswordBox = styled.div`width: 294px; height: 21px; flex: none; margin: 3px 0 0 1px; border: 1px solid #0f6cbd; background: #fff; display: flex; align-items: center; padding: 0 3px 1px 5px; box-shadow: 0 0 0 1px #e2f1fb;`;
const TextCaret = styled.div`width: 1px; height: 13px; background: #000;`;
const CheckRow = styled.div<{ $mt: number }>`display: flex; align-items: flex-start; height: 14px; flex: none; gap: 2px; margin: ${p => p.$mt}px 0 0 1px;`;
const CheckBox = styled.div<{ $off?: boolean }>`width: 13px; height: 13px; background: #fff; border: 1px solid ${p => (p.$off ? '#cccccc' : '#333')};`;
const Button = styled.div<{ $w: number; $default?: boolean }>`
  width: ${p => p.$w}px; height: 22px; flex: none; display: flex; align-items: center; justify-content: center; background: #e1e1e1;
  border: ${p => (p.$default ? '2px solid #0f74d0' : '1px solid #adadad')};
`;
const ButtonRow = styled.div`display: flex; padding: 13px 0 0 9px;`;

function PasswordDialog() {
  const t = { font: TAHOMA, size: 11, color: '#000' };
  return (
    <DialogWindow>
      <DialogTitle><WinRar /><Gap $w={5} /><Text w={80} color="#000">Enter password</Text><Grow /><Cross s={11} color="#222" sw={1.1} /></DialogTitle>
      <Prompt>
        <Text {...t} w={180} line={14}>Enter password for the encrypted file</Text>
        <Text {...t} w={314} line={15}>{'C:\\Users\\admin\\Downloads\\Software v1.24 loader\\jre\\bin\\awt.dll'}</Text>
        <Text {...t} w={174} line={14}>in archive Software v1.24 loader.zip</Text>
      </Prompt>
      <Fieldset>
        <Text {...t} w={76} line={15}>Enter password</Text>
        <PasswordBox><TextCaret /><Grow /><Chevron w={10} h={6} dir="down" color="#555" sw={1.1} /></PasswordBox>
        <CheckRow $mt={62}><CheckBox /><Text {...t} w={75} line={16}>Show password</Text></CheckRow>
        <CheckRow $mt={48}><CheckBox $off /><Text {...t} w={92} line={16} color="#6d6d6d">Use for all archives</Text></CheckRow>
        <Gap $h={9} />
        <Center $w={296}><Button $w={292}><Text {...t} w={109}>Organize passwords...</Text></Button></Center>
      </Fieldset>
      <ButtonRow>
        <Button $w={94} $default><Text {...t} w={15}>OK</Text></Button><Gap $w={15} />
        <Button $w={94}><Text {...t} w={33}>Cancel</Text></Button><Gap $w={16} />
        <Button $w={94}><Text {...t} w={22}>Help</Text></Button>
      </ButtonRow>
    </DialogWindow>
  );
}

/* ---------- Watermark ---------- */
const Watermark = styled.div`
  position: absolute; left: 1037px; top: 607px; width: 196px; height: 66px; display: flex; align-items: center; justify-content: space-between;
  opacity: .8; filter: drop-shadow(0 0 2px rgba(120, 120, 120, .7));
`;
const WatermarkWord = styled.div`width: 63px; height: 66px; display: flex; justify-content: center; transform: scaleX(.6);`;

/* ---------- Taskbar ---------- */
const Taskbar = styled.div`height: 40px; flex: none; display: flex; background: linear-gradient(90deg, #02161f 0, #02131d 40%, #020a17 80%, #020814 100%);`;
const SearchField = styled.div`width: 288px; height: 40px; background: #f2f2f2; border: 1px solid #cfd1d3; display: flex; align-items: center; padding-left: 12px;`;
const TaskItem = styled.div<{ $w?: number; $line?: number; $on?: boolean }>`
  width: ${p => p.$w ?? 49}px; height: 40px; flex: none; display: flex; align-items: center; justify-content: center;
  background: ${p => (p.$on ? '#3b4750' : 'transparent')};
  background-image: ${p => (p.$line ? 'linear-gradient(#79b8ea, #79b8ea)' : 'none')};
  background-size: ${p => p.$line ?? 0}px 2px; background-position: center bottom; background-repeat: no-repeat;
`;
const Clock = styled.div`width: 64px; display: flex; flex-direction: column; align-items: center; padding-top: 2px;`;
const PeekEdge = styled.div`width: 4px; height: 40px; border-left: 1px solid #56606a;`;

const Earth = () => (
  <svg width="70" height="38" viewBox="0 0 70 38">
    <circle cx="37" cy="34" r="22" fill="#3b86dd" />
    <path d="M19 22Q27 13 36 13Q40 16 36 19Q31 20 32 24Q38 25 34 30Q28 27 24 30Q20 34 16 32Q15 27 19 22ZM41 13Q53 16 57 26Q59 34 52 34Q46 33 44 27Q49 23 43 21Q39 17 41 13ZM28 38Q30 33 38 34Q43 35 41 38Z" fill="#5a9f35" />
    <path d="M18 32Q24 34 27 38H16ZM33 26Q37 29 43 29Q38 32 33 29Z" fill="#8fc3f6" />
    <path d="M35 13C27 7 28 2 32 2Q35 2 35 4Q36 2 39 2C43 3 42 8 35 13Z" fill="#f0644a" />
    <path d="M19 18C12 16 9 11 12 9Q15 8 16 10Q16 7 19 7C23 9 22 14 19 18Z" fill="#2ea866" />
    <path d="M51 17C49 10 51 6 54 7Q56 8 56 10Q58 8 61 10C64 13 58 17 51 17Z" fill="#f7bd2e" />
    <path d="M10 32C3 34-1 31 1 28Q3 27 5 28Q3 24 6 22C10 22 11 27 10 32Z" fill="#a982d8" />
    <path d="M59 33C58 26 60 24 63 25Q65 26 64 28Q67 27 68 30C68 34 64 34 59 33Z" fill="#59a4e6" />
  </svg>
);

function TaskbarView() {
  const g = 'none';
  return (
    <Taskbar>
      <TaskItem $w={48}><svg width="16" height="16"><path d="M0 2.300L6.700 1.300V7.500H0ZM7.600 1.200L16 0V7.500H7.600ZM0 8.400H6.700V14.700L0 13.700ZM7.600 8.400H16V16L7.600 14.800Z" fill="#fff" /></svg></TaskItem>
      <SearchField>
        <Magnifier s={16} color="#333" sw={1} /><Gap $w={11} />
        <Text w={129} size={13.5} color="#444" line={20}>Type here to search</Text>
        <Gap $w={44} /><Earth />
      </SearchField>
      <TaskItem $w={48}><svg width="17" height="17"><path d="M2.500 5.500H10.500V11.500H2.500ZM.5 0V2.500H12.500V0M.5 17V14.500H12.500V17M15.500 0V4M15.500 9V17" fill={g} stroke="#e6e9eb" strokeWidth="1.200" /><rect x="14" y="5" width="3" height="3" fill="#fff" /></svg></TaskItem>
      <TaskItem $w={52}>
        <svg width="24" height="24" viewBox="0 0 24 24"><circle cx="12" cy="12" r="12" fill="#1b7fd3" /><path d="M0 12C1 4 7 0 12 0C19 0 24 5 24 11C24 15 20 17 16 16C13 15 15 14 15 11C14 6 5 5 0 12Z" fill="#3fcf9c" /><path d="M0 12C1 4 7 0 12 0L14 .5C8 3 3 6 0 12Z" fill="#35b8e0" /><path d="M0 12C3 7 9 7 11 9C8 11 8 17 14 19C17 20 20 19 22 18C18 24 10 26 5 21C2 19 0 16 0 12Z" fill="#1669be" /><path d="M11 9C8 12 9 17 15 18C11 21 6 18 6 13C6 11 8 9 11 9Z" fill="#0d4f9b" /><path d="M11 9.500C13 9 15 11 14.500 13C14 15 16 16 17 16L15 17C11 16 9 13 11 9.500Z" fill="#02161f" /></svg>
      </TaskItem>
      <TaskItem $w={48} $line={40}><svg width="22" height="20"><path d="M0 1H8L10 3H22V19H0Z" fill="#f0b429" /><rect y="5" width="22" height="14" fill="#fbd665" /><path d="M4 12H18V19H14V15H8V19H4Z" fill="#3d8fd8" /></svg></TaskItem>
      <TaskItem $w={50}><svg width="23" height="23" viewBox="0 0 23 23"><path d="M3 4L6 6Q9 2 14 1Q14 4 18 6Q23 10 22 15Q20 23 11.500 23Q2 22 1 14Q0 8 3 4Z" fill="#ff8a1f" /><path d="M14 1Q14 4 18 6Q23 10 22 15Q20 11 17 10Q14 6 14 1Z" fill="#ffd43a" /><circle cx="12" cy="13" r="5.500" fill="#7a3fd0" /><path d="M1 14Q4 11 9 10Q11 11 13 10Q12 13 9 13Q8 17 12 18Q17 18 18 13Q20 20 12 22Q3 22 1 14Z" fill="#ff4a3d" /></svg></TaskItem>
      <TaskItem $w={48} $line={40}>
        <svg width="24" height="24" viewBox="0 0 24 24"><circle cx="12" cy="12" r="12" fill="#fbc116" /><path d="M1.600 6A12 12 0 0 1 22.400 6H12A6 6 0 0 0 6.800 15Z" fill="#e33b2e" /><path d="M1.600 6A12 12 0 0 0 12 24L17.200 15A6 6 0 0 1 6.800 15Z" fill="#2da94f" /><circle cx="12" cy="12" r="5.800" fill="#fff" /><circle cx="12" cy="12" r="4.500" fill="#3a7cec" /></svg>
      </TaskItem>
      <Gap $w={1} />
      <TaskItem $w={48} $line={48} $on><WinRar s={24} /></TaskItem>
      <Grow />
      <TaskItem $w={24}><Chevron w={12} h={8} dir="up" color="#fff" sw={1.2} /></TaskItem>
      <TaskItem $w={24}><svg width="12" height="16"><rect x="1" y="4.500" width="7" height="7" rx="1.500" fill={g} stroke="#fff" strokeWidth="1.200" /><path d="M8.500 7L11.500 5.500V10.500L8.500 9M2 2Q5 0 9 2M2 14Q5 16 9 14" fill={g} stroke="#fff" /></svg></TaskItem>
      <TaskItem $w={24}><svg width="17" height="15"><path d="M4.500 2.500H16V10.500H5M10 10.500V14M7 14H13M.5 1H4V5H.5ZM2.300 5V14" fill={g} stroke="#fff" /></svg></TaskItem>
      <TaskItem $w={24}><svg width="18" height="14"><path d="M.5 5H3L6.500 1.500V12.500L3 9H.5ZM9 4.500Q10.500 7 9 9.500M11.500 2.500Q14 7 11.500 11.500M14 .5Q18 7 14 13.500" fill={g} stroke="#fff" /></svg></TaskItem>
      <Clock>
        <Text w={43} size={11.500} color="#fff" line={18}>9:33 PM</Text>
        <Text w={53} size={11.500} color="#fff" line={18}>8/17/2024</Text>
      </Clock>
      <TaskItem $w={41}><svg width="16" height="16"><path d="M.5 .5H15.500V12.500H11L8 15.500V12.500H.5Z" fill={g} stroke="#fff" strokeWidth="1.100" /></svg></TaskItem>
      <Gap $w={8} />
      <PeekEdge />
    </Taskbar>
  );
}

export default function App() {
  const mark = { size: 50, color: '#fdfdfd', font: "'Liberation Sans', sans-serif", line: 69 };
  return (
    <>
      <GlobalStyle />
      <Desktop>
        <Browser />
        <TaskbarView />
        <Explorer />
        <PasswordDialog />
        <Watermark>
          <WatermarkWord><Text {...mark}>ANY</Text></WatermarkWord>
          <svg width="56" height="64"><path d="M3 14V50M10 46V3L53 31L15 60M17 52V13L43 31L22 45" fill="none" stroke="#fdfdfd" strokeWidth="2.600" /></svg>
          <WatermarkWord><Text {...mark}>RUN</Text></WatermarkWord>
        </Watermark>
      </Desktop>
    </>
  );
}
